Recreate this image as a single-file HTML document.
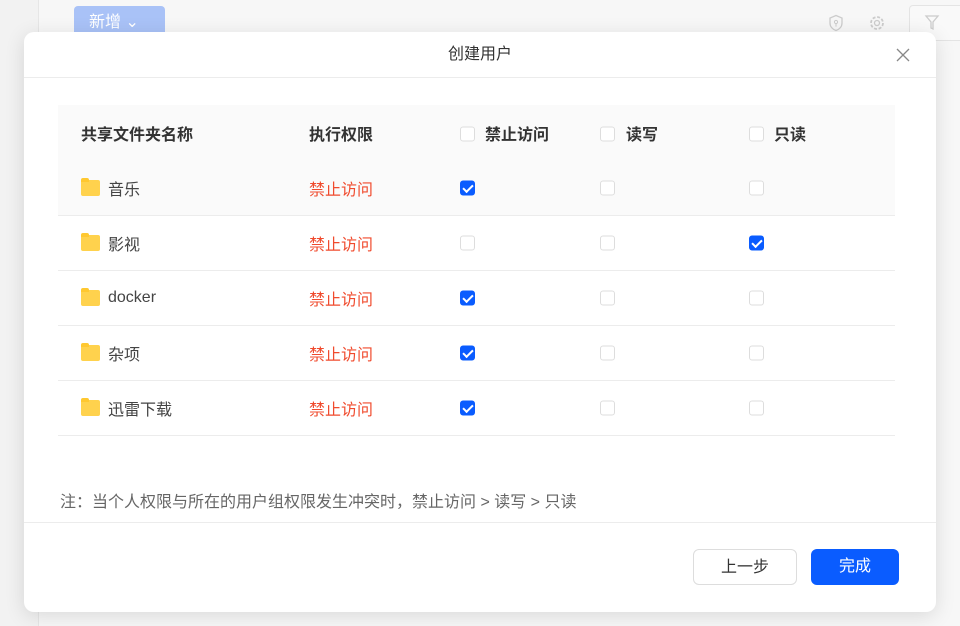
<!DOCTYPE html>
<html><head><meta charset="utf-8"><style>
*{box-sizing:border-box;margin:0;padding:0}
body{width:960px;height:626px;overflow:hidden;background:#f2f2f2;font-family:"Liberation Sans","Noto Sans CJK SC",sans-serif;position:relative}
.bgpage{position:absolute;left:38px;top:0;right:0;height:626px;background:#f7f7f7;border-left:1px solid #e6e6e6}
.add{position:absolute;left:74px;top:6px;width:91px;height:34px;background:#a9c2f7;border-radius:4px;color:#fff;font-size:16px;line-height:34px;padding-left:15px}
.fbtn{position:absolute;left:909px;top:5px;width:60px;height:36px;border:1px solid #e4e4e4;border-radius:4px;background:#f9f9f9}
.modal{position:absolute;left:24px;top:32px;width:912px;height:580px;background:#fff;border-radius:10px;box-shadow:0 4px 20px rgba(0,0,0,.12)}
.hd{height:46px;border-bottom:1px solid #ececec;text-align:center;line-height:46px;font-size:16px;color:#333}
.x{position:absolute;right:25px;top:15px;width:16px;height:16px}
.tbl{position:absolute;left:34px;top:73px;width:837px}
.row{height:55px;border-bottom:1px solid #ececec;position:relative;font-size:16px;color:#444}
.row.h{background:#fafafa;border-bottom:none;font-weight:bold;color:#333}
.row.g{background:#fafafa}
.row>*{position:absolute;top:50%;transform:translateY(-50%)}
.cb{width:15px;height:15px;border:1px solid #ddd;border-radius:3px;background:#fff}
.cb.on{background:#0a5cff;border-color:#0a5cff}
.cb.on:after{content:"";position:absolute;left:4px;top:1px;width:4px;height:8px;border:solid #fff;border-width:0 2px 2px 0;transform:rotate(45deg)}
.red{color:#f04b2e;font-weight:normal}
.fd{width:19px;height:16px;background:#ffd24d;border-radius:2px}
.fd:before{content:"";position:absolute;left:0;top:-2px;width:8px;height:4px;background:#ffc830;border-radius:2px 2px 0 0}
.note{position:absolute;left:36px;top:456px;font-size:16px;color:#666}
.ft{position:absolute;left:0;right:0;top:490px;border-top:1px solid #ececec}
.btn{position:absolute;top:517px;height:36px;border-radius:6px;font-size:16px;text-align:center;line-height:36px}
</style></head><body>
<div class="bgpage"></div>
<div class="add">新增 ⌄</div>
<svg style="position:absolute;left:827px;top:14px" width="18" height="18" viewBox="0 0 18 18"><path d="M9 1.5L3 4v5c0 4 3 6.5 6 7.5 3-1 6-3.5 6-7.5V4z" fill="none" stroke="#ccc" stroke-width="1.3"/><circle cx="9" cy="8" r="1.6" fill="none" stroke="#ccc"/><path d="M9 9.6v3" stroke="#ccc"/></svg>
<svg style="position:absolute;left:868px;top:14px" width="18" height="18" viewBox="0 0 18 18"><circle cx="9" cy="9" r="6" fill="none" stroke="#ccc" stroke-width="1.8" stroke-dasharray="3 1.7"/><circle cx="9" cy="9" r="2.5" fill="none" stroke="#ccc" stroke-width="1.3"/></svg>
<div class="fbtn"><svg style="position:absolute;left:14px;top:8px" width="16" height="18" viewBox="0 0 16 18"><path d="M2 2h12l-5 6v7l-2-1V8z" fill="none" stroke="#ccc" stroke-width="1.3"/></svg></div>
<div class="modal">
<div class="hd">创建用户</div>
<svg class="x" viewBox="0 0 16 16"><path d="M2 2L14 14M14 2L2 14" stroke="#888" stroke-width="1.3"/></svg>
<div class="tbl">
<div class="row h"><span style="left:23px">共享文件夹名称</span><span style="left:251px">执行权限</span>
<div class="cb" style="left:402px;top:29px"></div><span style="left:427px;top:28px">禁止访问</span>
<div class="cb" style="left:542px;top:29px"></div><span style="left:568px;top:28px">读写</span>
<div class="cb" style="left:691px;top:29px"></div><span style="left:716px;top:28px">只读</span></div>
<div class="row g" style="height:56px"><div class="fd" style="left:23px"></div><span style="left:50px">音乐</span><span class="red" style="left:251px">禁止访问</span><div class="cb on" style="left:402px"></div><div class="cb" style="left:542px"></div><div class="cb" style="left:691px"></div></div>
<div class="row"><div class="fd" style="left:23px"></div><span style="left:50px">影视</span><span class="red" style="left:251px">禁止访问</span><div class="cb" style="left:402px"></div><div class="cb" style="left:542px"></div><div class="cb on" style="left:691px"></div></div>
<div class="row"><div class="fd" style="left:23px"></div><span style="left:50px">docker</span><span class="red" style="left:251px">禁止访问</span><div class="cb on" style="left:402px"></div><div class="cb" style="left:542px"></div><div class="cb" style="left:691px"></div></div>
<div class="row"><div class="fd" style="left:23px"></div><span style="left:50px">杂项</span><span class="red" style="left:251px">禁止访问</span><div class="cb on" style="left:402px"></div><div class="cb" style="left:542px"></div><div class="cb" style="left:691px"></div></div>
<div class="row"><div class="fd" style="left:23px"></div><span style="left:50px">迅雷下载</span><span class="red" style="left:251px">禁止访问</span><div class="cb on" style="left:402px"></div><div class="cb" style="left:542px"></div><div class="cb" style="left:691px"></div></div>
</div>
<div class="note">注：当个人权限与所在的用户组权限发生冲突时，禁止访问 &gt; 读写 &gt; 只读</div>
<div class="ft"></div>
<div class="btn" style="left:669px;width:104px;border:1px solid #ddd;color:#333">上一步</div>
<div class="btn" style="left:787px;width:88px;background:#0a5cff;color:#fff">完成</div>
</div>
</body></html>
